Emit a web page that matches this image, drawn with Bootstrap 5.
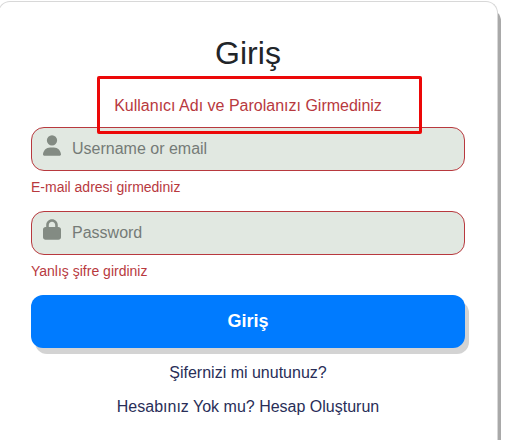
<!DOCTYPE html>
<html lang="tr">
<head>
<meta charset="utf-8">
<meta name="viewport" content="width=device-width, initial-scale=1">
<title>Giriş</title>
<link href="https://cdn.jsdelivr.net/npm/bootstrap@5.3.0/dist/css/bootstrap.min.css" rel="stylesheet">
<style>
body{font-family:"Liberation Sans",Arial,sans-serif;background:#fff;color:#212529;overflow:hidden;height:440px}
.login-card{width:500px;height:439px;margin:1px 0 0 -2px;padding:32px 32px 0;border:1px solid #d8d8d8;border-bottom:0;border-radius:12px 12px 0 0;box-shadow:3px 8px 0 #a9a9a9}
.login-title{font-size:32px;line-height:38px;margin:0}
.login-alert{font-size:16px;line-height:24px;color:#b8393e;margin:22px 0 9px}
.callout-frame{position:absolute;left:97px;top:76px;width:325px;height:58px;border:3px solid #ec0808;border-radius:2px;pointer-events:none}
.login-field{height:44px;border:1px solid #b8393e;border-radius:13px;background:#e1e8e1;padding:0 11px}
.login-field svg{width:18px;height:21px;fill:#838b83;flex:none;margin-top:-7px}
.login-field input,.login-field input:focus{background:transparent;font-size:16px;line-height:24px;padding:0;margin-left:11px;color:#212529;box-shadow:none}
.login-field input::placeholder{color:#757b77;opacity:1}
.field-error{font-size:14px;line-height:20px;color:#b8393e;margin:6px 0 14px}
.login-submit,.login-submit:hover{height:53px;border:0;border-radius:12px;background:#007bff;color:#fff;font-size:18px;font-weight:700;box-shadow:4px 6px 0 #d3d3d3}
.login-links{gap:10px;margin-top:13px}
.login-link{color:#292e58;font-size:16px;line-height:24px}
</style>
<script src="https://cdn.jsdelivr.net/npm/bootstrap@5.3.0/dist/js/bootstrap.bundle.min.js"></script>
</head>
<body>
<main class="login-card bg-white">
  <form class="d-flex flex-column">
    <h1 class="login-title text-center fw-normal">Giriş</h1>
    <p class="login-alert text-center">Kullanıcı Adı ve Parolanızı Girmediniz</p>
    <div class="login-field d-flex align-items-center">
      <svg viewBox="0 0 448 512" aria-hidden="true"><path d="M224 256a128 128 0 1 0 0-256 128 128 0 1 0 0 256zm-45.700 48C79.800 304 0 383.800 0 482.300 0 498.700 13.300 512 29.700 512h388.600c16.400 0 29.700-13.300 29.700-29.700C448 383.800 368.200 304 269.700 304z"/></svg>
      <input class="form-control border-0" type="text" placeholder="Username or email" aria-label="Username or email">
    </div>
    <div class="field-error">E-mail adresi girmediniz</div>
    <div class="login-field d-flex align-items-center">
      <svg viewBox="0 0 448 512" aria-hidden="true"><path d="M144 144v48h160v-48c0-44.200-35.800-80-80-80s-80 35.800-80 80zm-64 48v-48C80 64.500 144.500 0 224 0s144 64.500 144 144v48h16c35.300 0 64 28.700 64 64v192c0 35.300-28.700 64-64 64H64c-35.300 0-64-28.700-64-64V256c0-35.300 28.700-64 64-64z"/></svg>
      <input class="form-control border-0" type="password" placeholder="Password" aria-label="Password">
    </div>
    <div class="field-error">Yanlış şifre girdiniz</div>
    <button class="login-submit btn w-100" type="button">Giriş</button>
    <div class="login-links d-flex flex-column align-items-center">
      <a class="login-link text-decoration-none" href="#">Şifernizi mi unutunuz?</a>
      <a class="login-link text-decoration-none" href="#">Hesabınız Yok mu? Hesap Oluşturun</a>
    </div>
  </form>
</main>
<div class="callout-frame"></div>
</body>
</html>
